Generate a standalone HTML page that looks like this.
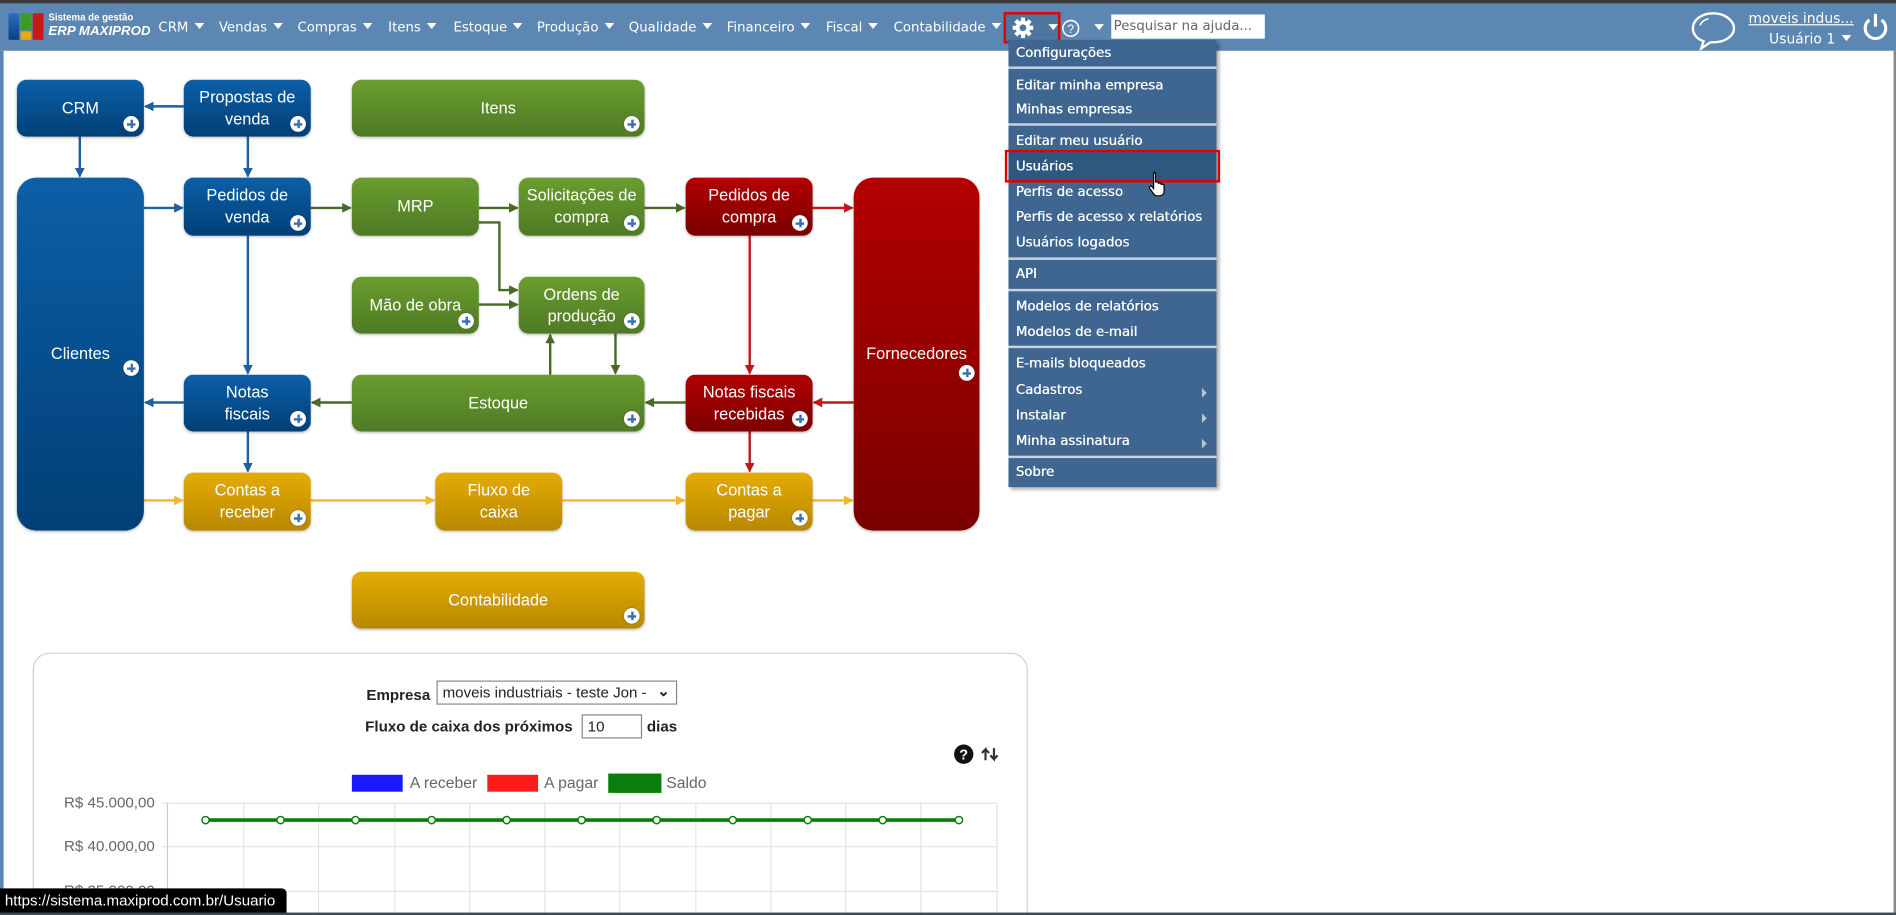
<!DOCTYPE html>
<html><head><meta charset="utf-8">
<style>
html,body{margin:0;padding:0;width:1896px;height:915px;overflow:hidden;background:#fff}
#w{position:absolute;left:0;top:0;width:1568px;height:757px;transform:scale(1.2092,1.2087);transform-origin:0 0;font-family:"DejaVu Sans","Liberation Sans",sans-serif;background:#fff;overflow:hidden}
.a{position:absolute}
.top{left:0;top:0;width:1568px;height:3px;background:#3a3a3a}
.bar{left:0;top:3px;width:1568px;height:39px;background:#5c87b2}
.lstrip{left:0;top:42px;width:3px;height:715px;background:#5c87b2}
.rstrip{left:1566px;top:42px;width:2px;height:715px;background:#888}
.bstrip{left:0;top:755px;width:1568px;height:2px;background:#3b4a55}
.m{top:16px;color:#fff;font-size:11px;white-space:nowrap}
.tri{display:inline-block;width:0;height:0;border-left:4px solid transparent;border-right:4px solid transparent;border-top:5px solid #fff;margin-left:5px;vertical-align:2px}
.box{position:absolute;display:flex;align-items:center;justify-content:center;text-align:center;color:#fff;font-family:"Liberation Sans",sans-serif;font-size:13.5px;line-height:18px;border-radius:8px;box-shadow:0 1px 2px rgba(0,0,0,.25)}
.b{background:linear-gradient(#0c5fa7,#013f76)}
.g{background:linear-gradient(#6a9d2f,#4f7a24)}
.r{background:linear-gradient(#b30000,#7a0000)}
.y{background:linear-gradient(#e5ac05,#b88800)}
.p{position:absolute;right:4px;bottom:4px;width:13px;height:13px;border-radius:50%;background:#fff;box-shadow:0 0 1px #333}
.p:before{content:"";position:absolute;left:3px;top:5.5px;width:7px;height:2px;background:#3a6fb0}
.p:after{content:"";position:absolute;left:5.5px;top:3px;width:2px;height:7px;background:#3a6fb0}
.dd{left:834px;top:33px;width:172px;height:370px;background:#3f6690;box-shadow:2px 2px 3px rgba(0,0,0,.35)}
.di{position:absolute;left:6px;color:#fff;font-size:11px;white-space:nowrap;text-shadow:0.3px 0 0 #fff}
.sep{position:absolute;left:0;width:172px;height:2px;background:#c9d3dd}
.arr{position:absolute;right:8px;width:0;height:0;border-top:4px solid transparent;border-bottom:4px solid transparent;border-left:4px solid #b8c6d4}
.lbl{font-family:"Liberation Sans",sans-serif;font-size:13px;color:#666}
.fl{font-family:"Liberation Sans",sans-serif;font-size:12.5px;font-weight:bold;color:#222}
</style></head><body><div id="w">
<div class="a top"></div><div class="a bar"></div>
<div class="a lstrip"></div><div class="a rstrip"></div>

<div class="a" style="left:7px;top:11px;width:9px;height:22px;background:linear-gradient(#2a6fc0,#0a3f85);border-radius:1px"></div>
<div class="a" style="left:17px;top:11px;width:9px;height:14px;background:#3c9a25;border-radius:1px"></div>
<div class="a" style="left:17px;top:26px;width:9px;height:7px;background:#e6a911;border-radius:1px"></div>
<div class="a" style="left:27px;top:11px;width:9px;height:22px;background:#c91818;border-radius:1px"></div>
<div class="a" style="left:40px;top:10px;color:#fff;font-size:8px;font-family:'Liberation Sans',sans-serif;font-weight:bold">Sistema de gestão</div>
<div class="a" style="left:40px;top:20px;color:#fff;font-size:11px;font-weight:bold;font-style:italic;font-family:'Liberation Sans',sans-serif">ERP MAXIPROD</div>

<div class="a m" style="left:131px">CRM<span class="tri"></span></div>
<div class="a m" style="left:181px">Vendas<span class="tri"></span></div>
<div class="a m" style="left:246px">Compras<span class="tri"></span></div>
<div class="a m" style="left:321px">Itens<span class="tri"></span></div>
<div class="a m" style="left:375px">Estoque<span class="tri"></span></div>
<div class="a m" style="left:444px">Produção<span class="tri"></span></div>
<div class="a m" style="left:520px">Qualidade<span class="tri"></span></div>
<div class="a m" style="left:601px">Financeiro<span class="tri"></span></div>
<div class="a m" style="left:683px">Fiscal<span class="tri"></span></div>
<div class="a m" style="left:739px">Contabilidade<span class="tri"></span></div>

<div class="a" style="left:830px;top:10px;width:43px;height:22px;border:2px solid #e00000;background:#4e76a0"></div>
<svg class="a" style="left:836px;top:13px" width="20" height="20" viewBox="0 0 20 20"><g fill="#fff"><circle cx="10" cy="10" r="6"/><g id="t"><rect x="8.3" y="1.5" width="3.4" height="4"/><rect x="8.3" y="14.5" width="3.4" height="4"/></g><use href="#t" transform="rotate(45 10 10)"/><use href="#t" transform="rotate(90 10 10)"/><use href="#t" transform="rotate(135 10 10)"/></g><circle cx="10" cy="10" r="2.8" fill="#4e76a0"/></svg>
<div class="a" style="left:862px;top:12px"><span class="tri"></span></div>
<svg class="a" style="left:878px;top:16px" width="15" height="15"><circle cx="7.5" cy="7.5" r="6.5" fill="none" stroke="#fff" stroke-width="1.3"/><text x="7.5" y="11.5" font-size="10" fill="#fff" text-anchor="middle" font-family="Liberation Sans">?</text></svg>
<div class="a" style="left:900px;top:12px"><span class="tri"></span></div>
<div class="a" style="left:919px;top:12px;width:127px;height:20px;background:#fff;font-size:11px;color:#666;line-height:20px;padding-left:2px;box-sizing:border-box">Pesquisar na ajuda...</div>

<svg class="a" style="left:1397px;top:8px" width="40" height="34" viewBox="0 0 40 34"><path d="M20 3C10 3 3 8.5 3 15.5c0 5 3.6 8.8 8.8 10.6L10 32l7.5-5C18.3 27 19 27 20 27c10 0 17-5.5 17-11.5S30 3 20 3z" fill="none" stroke="#fff" stroke-width="2"/><path d="M9 13c1-3 4-5 7-5.5" fill="none" stroke="#fff" stroke-width="1.3"/></svg>
<div class="a" style="left:1446px;top:8px;color:#fff;font-size:11.5px;text-decoration:underline">moveis indus...</div>
<div class="a" style="left:1463px;top:25px;color:#fff;font-size:11.5px">Usuário 1<span class="tri"></span></div>
<svg class="a" style="left:1540px;top:10px" width="22" height="24" viewBox="0 0 22 24"><path d="M6 6.5A8.5 8.5 0 1 0 16 6.5" fill="none" stroke="#fff" stroke-width="2.6"/><line x1="11" y1="1.5" x2="11" y2="12" stroke="#fff" stroke-width="2.6"/></svg>

<svg class="a" style="left:0;top:0" width="1568" height="757">
<defs>
<marker id="mb" markerWidth="8" markerHeight="8" refX="7" refY="4" orient="auto" markerUnits="userSpaceOnUse"><path d="M0,0L8,4L0,8z" fill="#1c5fa5"/></marker>
<marker id="mg" markerWidth="8" markerHeight="8" refX="7" refY="4" orient="auto" markerUnits="userSpaceOnUse"><path d="M0,0L8,4L0,8z" fill="#466b25"/></marker>
<marker id="mr" markerWidth="8" markerHeight="8" refX="7" refY="4" orient="auto" markerUnits="userSpaceOnUse"><path d="M0,0L8,4L0,8z" fill="#c01818"/></marker>
<marker id="my" markerWidth="8" markerHeight="8" refX="7" refY="4" orient="auto" markerUnits="userSpaceOnUse"><path d="M0,0L8,4L0,8z" fill="#efb72a"/></marker>
</defs>
<g fill="none" stroke-width="2">
<g stroke="#1c5fa5" marker-end="url(#mb)">
<path d="M152 88H120"/><path d="M66 113V146"/><path d="M205 113V146"/><path d="M119 172H151"/><path d="M205 195V309"/><path d="M152 333H120"/><path d="M205 357V390"/>
</g>
<g stroke="#466b25" marker-end="url(#mg)">
<path d="M257 172H290"/><path d="M396 172H428"/><path d="M533 172H566"/><path d="M396 184H413V240H428"/><path d="M396 252H428"/><path d="M455 310V277"/><path d="M509 276V309"/><path d="M291 333H258"/><path d="M567 333H534"/>
</g>
<g stroke="#c01818" marker-end="url(#mr)">
<path d="M672 172H705"/><path d="M620 195V309"/><path d="M706 333H673"/><path d="M620 357V390"/>
</g>
<g stroke="#efb72a" marker-end="url(#my)">
<path d="M119 414H151"/><path d="M257 414H359"/><path d="M465 414H566"/><path d="M672 414H705"/>
</g>
</g>
</svg>

<div class="box b" style="left:14px;top:66px;width:105px;height:47px">CRM<i class="p"></i></div>
<div class="box b" style="left:152px;top:66px;width:105px;height:47px">Propostas de<br>venda<i class="p"></i></div>
<div class="box g" style="left:291px;top:66px;width:242px;height:47px">Itens<i class="p"></i></div>
<div class="box b" style="left:14px;top:147px;width:105px;height:292px;border-radius:16px">Clientes<i class="p" style="bottom:128px"></i></div>
<div class="box b" style="left:152px;top:147px;width:105px;height:48px">Pedidos de<br>venda<i class="p"></i></div>
<div class="box g" style="left:291px;top:147px;width:105px;height:48px">MRP</div>
<div class="box g" style="left:429px;top:147px;width:104px;height:48px">Solicitações de<br>compra<i class="p"></i></div>
<div class="box r" style="left:567px;top:147px;width:105px;height:48px">Pedidos de<br>compra<i class="p"></i></div>
<div class="box r" style="left:706px;top:147px;width:104px;height:292px;border-radius:16px">Fornecedores<i class="p" style="bottom:124px"></i></div>
<div class="box g" style="left:291px;top:229px;width:105px;height:47px">Mão de obra<i class="p"></i></div>
<div class="box g" style="left:429px;top:229px;width:104px;height:47px">Ordens de<br>produção<i class="p"></i></div>
<div class="box b" style="left:152px;top:310px;width:105px;height:47px">Notas<br>fiscais<i class="p"></i></div>
<div class="box g" style="left:291px;top:310px;width:242px;height:47px">Estoque<i class="p"></i></div>
<div class="box r" style="left:567px;top:310px;width:105px;height:47px">Notas fiscais<br>recebidas<i class="p"></i></div>
<div class="box y" style="left:152px;top:391px;width:105px;height:48px">Contas a<br>receber<i class="p"></i></div>
<div class="box y" style="left:360px;top:391px;width:105px;height:48px">Fluxo de<br>caixa</div>
<div class="box y" style="left:567px;top:391px;width:105px;height:48px">Contas a<br>pagar<i class="p"></i></div>
<div class="box y" style="left:291px;top:473px;width:242px;height:47px">Contabilidade<i class="p"></i></div>

<div class="a" style="left:27px;top:540px;width:821px;height:240px;border:1px solid #d0d0d0;border-radius:14px"></div>
<div class="a fl" style="left:303px;top:568px">Empresa</div>
<div class="a" style="left:361px;top:563px;width:199px;height:20px;border:1px solid #888;box-sizing:border-box;font-family:'Liberation Sans',sans-serif;font-size:12.5px;line-height:18px;padding-left:4px;color:#222">moveis industriais - teste Jon -<span style="position:absolute;right:5px;top:-1px;font-weight:bold">&#8964;</span></div>
<div class="a fl" style="left:302px;top:594px">Fluxo de caixa dos próximos</div>
<div class="a" style="left:481px;top:591px;width:50px;height:20px;border:1px solid #888;box-sizing:border-box;font-family:'Liberation Sans',sans-serif;font-size:12.5px;line-height:18px;padding-left:4px;color:#222">10</div>
<div class="a fl" style="left:535px;top:594px">dias</div>
<svg class="a" style="left:789px;top:615px" width="40" height="18"><circle cx="8" cy="9" r="8" fill="#111"/><text x="8" y="13.5" font-size="12" font-weight="bold" fill="#fff" text-anchor="middle" font-family="Liberation Sans">?</text><path d="M26 14V5l-3 3M26 5l3 3M33 4v9l-3-3M33 13l3-3" stroke="#333" stroke-width="1.8" fill="none"/></svg>
<div class="a" style="left:291px;top:641px;width:42px;height:14px;background:#1a1aff"></div>
<div class="a lbl" style="left:339px;top:640px">A receber</div>
<div class="a" style="left:403px;top:641px;width:42px;height:14px;background:#ff1a1a"></div>
<div class="a lbl" style="left:450px;top:640px">A pagar</div>
<div class="a" style="left:503px;top:640px;width:44px;height:16px;background:#0a7d0a"></div>
<div class="a lbl" style="left:551px;top:640px">Saldo</div>
<div class="a lbl" style="left:20px;top:657px;width:108px;text-align:right;font-size:12.5px">R$ 45.000,00</div>
<div class="a lbl" style="left:20px;top:693px;width:108px;text-align:right;font-size:12.5px">R$ 40.000,00</div>
<div class="a lbl" style="left:20px;top:730px;width:108px;text-align:right;font-size:12.5px">R$ 35.000,00</div>
<svg class="a" style="left:0;top:0" width="1568" height="757">
<g stroke="#e4e4e4" stroke-width="1">
<path d="M134 664.5H825M134 700.5H825M134 737.5H825"/>
<path d="M201.5 664V757M263.5 664V757M326.5 664V757M388.5 664V757M450.5 664V757M512.5 664V757M575.5 664V757M637.5 664V757M699.5 664V757M761.5 664V757M824.5 664V757"/>
</g>
<path d="M138.5 664V757" stroke="#ccc"/>
<path d="M170 678.5H793" stroke="#0a7d0a" stroke-width="3"/>
<g fill="#fff" stroke="#0a7d0a" stroke-width="1.2">
<circle cx="170" cy="678.5" r="3"/><circle cx="232" cy="678.5" r="3"/><circle cx="294" cy="678.5" r="3"/><circle cx="357" cy="678.5" r="3"/><circle cx="419" cy="678.5" r="3"/><circle cx="481" cy="678.5" r="3"/><circle cx="543" cy="678.5" r="3"/><circle cx="606" cy="678.5" r="3"/><circle cx="668" cy="678.5" r="3"/><circle cx="730" cy="678.5" r="3"/><circle cx="793" cy="678.5" r="3"/>
</g>
</svg>

<div class="a dd">
<div class="di" style="top:4px">Configurações</div>
<div class="sep" style="top:22px"></div>
<div class="di" style="top:31px">Editar minha empresa</div>
<div class="di" style="top:51px">Minhas empresas</div>
<div class="sep" style="top:69px"></div>
<div class="di" style="top:77px">Editar meu usuário</div>
<div style="position:absolute;left:0;top:92px;width:172px;height:24px;background:#2e5880"></div>
<div class="di" style="top:98px">Usuários</div>
<div class="di" style="top:119px">Perfis de acesso</div>
<div class="di" style="top:140px">Perfis de acesso x relatórios</div>
<div class="di" style="top:161px">Usuários logados</div>
<div class="sep" style="top:180px"></div>
<div class="di" style="top:187px">API</div>
<div class="sep" style="top:206px"></div>
<div class="di" style="top:214px">Modelos de relatórios</div>
<div class="di" style="top:235px">Modelos de e-mail</div>
<div class="sep" style="top:253px"></div>
<div class="di" style="top:261px">E-mails bloqueados</div>
<div class="di" style="top:283px">Cadastros</div><div class="arr" style="top:288px"></div>
<div class="di" style="top:304px">Instalar</div><div class="arr" style="top:309px"></div>
<div class="di" style="top:325px">Minha assinatura</div><div class="arr" style="top:330px"></div>
<div class="sep" style="top:344px"></div>
<div class="di" style="top:351px">Sobre</div>
</div>
<div class="a" style="left:831px;top:124px;width:174px;height:23px;border:2px solid #e00000"></div>
<svg class="a" style="left:949px;top:141px" width="16" height="22" viewBox="0 0 16 22"><path d="M5 1.5c1 0 1.6.6 1.6 1.6v6.5l1-.2c.9 0 1.4.5 1.4 1.1l1-.1c.8 0 1.3.5 1.3 1.1l.9-.1c.9 0 1.5.6 1.5 1.5v4.4c0 2-1.5 3.7-3.5 3.7H8c-1.5 0-2.5-.8-3.2-2L1.8 15c-.5-.8-.2-1.6.5-1.9.6-.3 1.3 0 1.8.7l.9 1.2V3.1c0-1 .6-1.6 1-1.6z" fill="#fff" stroke="#000" stroke-width="1"/></svg>

<div class="a" style="left:0;top:735px;width:237px;height:22px;background:#000;border-radius:0 4px 0 0;color:#fff;font-family:'Liberation Sans',sans-serif;font-size:12.5px;line-height:21px;padding-left:4px;box-sizing:border-box;white-space:nowrap;overflow:hidden">https://sistema.maxiprod.com.br/Usuario</div>
<div class="a bstrip"></div>
</div></body></html>
